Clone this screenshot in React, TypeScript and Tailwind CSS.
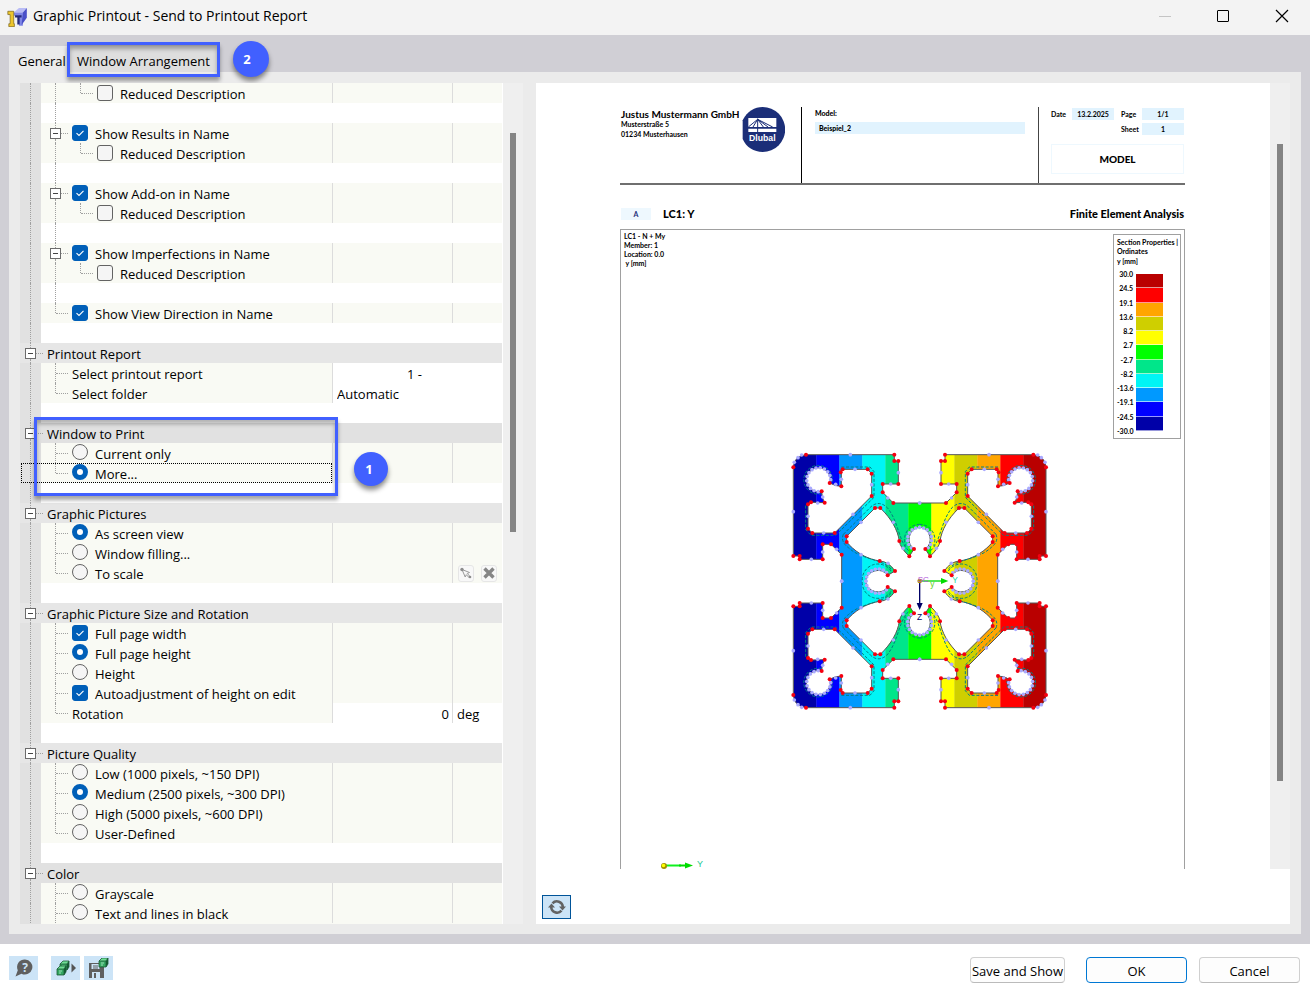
import type { ReactNode } from "react";
import clsx from "clsx";

type Row = {
  kind: "header" | "item" | "blank";
  label?: string;
  level?: 1 | 2;
  control?: "checkbox" | "radio";
  group?: string;
  checked?: boolean;
  box?: boolean;
  last?: boolean;
  through?: boolean;
  dark?: boolean;
  focused?: boolean;
  value?: "report" | "folder" | "rotation" | "scale";
};

const blank: Row = { kind: "blank" };
const blankThrough: Row = { kind: "blank", through: true };

const nameGroup = (label: string): Row[] => [
  { kind: "item", label, level: 1, control: "checkbox", checked: true, box: true },
  { kind: "item", label: "Reduced Description", level: 2, control: "checkbox", last: true, through: true },
  blankThrough,
];

const radios = (group: string, labels: string[], selected: number): Row[] =>
  labels.map((label, i) => ({
    kind: "item",
    label,
    level: 1,
    control: "radio",
    group,
    checked: i === selected,
    last: i === labels.length - 1,
  }));

const rows: Row[] = [
  { kind: "item", label: "Reduced Description", level: 2, control: "checkbox", last: true, through: true },
  blankThrough,
  ...nameGroup("Show Results in Name"),
  ...nameGroup("Show Add-on in Name"),
  ...nameGroup("Show Imperfections in Name"),
  { kind: "item", label: "Show View Direction in Name", level: 1, control: "checkbox", checked: true, last: true },
  blank,
  { kind: "header", label: "Printout Report" },
  { kind: "item", label: "Select printout report", level: 1, value: "report" },
  { kind: "item", label: "Select folder", level: 1, value: "folder", last: true },
  blank,
  { kind: "header", label: "Window to Print", dark: true },
  { kind: "item", label: "Current only", level: 1, control: "radio", group: "window" },
  { kind: "item", label: "More...", level: 1, control: "radio", group: "window", checked: true, last: true, focused: true },
  blank,
  { kind: "header", label: "Graphic Pictures" },
  { kind: "item", label: "As screen view", level: 1, control: "radio", group: "pictures", checked: true },
  { kind: "item", label: "Window filling...", level: 1, control: "radio", group: "pictures" },
  { kind: "item", label: "To scale", level: 1, control: "radio", group: "pictures", last: true, value: "scale" },
  blank,
  { kind: "header", label: "Graphic Picture Size and Rotation" },
  { kind: "item", label: "Full page width", level: 1, control: "checkbox", checked: true },
  { kind: "item", label: "Full page height", level: 1, control: "radio", group: "size", checked: true },
  { kind: "item", label: "Height", level: 1, control: "radio", group: "size" },
  { kind: "item", label: "Autoadjustment of height on edit", level: 1, control: "checkbox", checked: true },
  { kind: "item", label: "Rotation", level: 1, value: "rotation", last: true },
  blank,
  { kind: "header", label: "Picture Quality" },
  ...radios(
    "quality",
    ["Low (1000 pixels, ~150 DPI)", "Medium (2500 pixels, ~300 DPI)", "High (5000 pixels, ~600 DPI)", "User-Defined"],
    1
  ),
  blank,
  { kind: "header", label: "Color", dark: true },
  { kind: "item", label: "Grayscale", level: 1, control: "radio", group: "color" },
  { kind: "item", label: "Text and lines in black", level: 1, control: "radio", group: "color" },
];

function ExpandButton({ label }: { label: string }) {
  return (
    <button
      aria-label={`Collapse ${label}`}
      className="flex size-[11px] shrink-0 items-center justify-center border border-[#6b6b6b] bg-white"
    >
      <span className="h-px w-[5px] bg-[#444]" />
    </button>
  );
}

// one 25px indent column of the tree
function Guide({ type, label = "" }: { type: "none" | "line" | "tee" | "end" | "box"; label?: string }) {
  if (type === "none") return <span className="w-[25px] shrink-0" />;
  if (type === "box") {
    return (
      <span className="flex h-5 w-[25px] shrink-0 pl-[5px]">
        <span className="flex w-[11px] shrink-0 flex-col items-center">
          <span className="h-[5px] w-px border-l border-dotted border-[#a0a0a0]" />
          <ExpandButton label={label} />
          <span className="h-1 w-px border-l border-dotted border-[#a0a0a0]" />
        </span>
        <span className="mt-[10px] w-[7px] shrink-0 border-t border-dotted border-[#a0a0a0]" />
      </span>
    );
  }
  return (
    <span className="flex h-5 w-[25px] shrink-0 pl-[10px]">
      <span
        className={clsx(
          "w-px shrink-0 border-l border-dotted border-[#a0a0a0]",
          type === "end" ? "h-[10px]" : "h-5"
        )}
      />
      {type !== "line" && (
        <span className="mt-[10px] w-3 shrink-0 border-t border-dotted border-[#a0a0a0]" />
      )}
    </span>
  );
}

function Checkbox({ id, checked }: { id: string; checked?: boolean }) {
  return (
    <span className="mt-[2px] grid size-4 shrink-0 self-start">
      <input
        id={id}
        type="checkbox"
        defaultChecked={checked}
        className="peer col-start-1 row-start-1 size-4 appearance-none rounded-[3px] border border-[#636363] bg-[#f5f5f5] checked:border-[#005fb8] checked:bg-[#005fb8]"
      />
      <svg
        viewBox="0 0 16 16"
        className="pointer-events-none invisible col-start-1 row-start-1 size-4 peer-checked:visible"
      >
        <path d="M4.5 8.2 7 10.5l4.5-4.7" fill="none" stroke="#fff" strokeWidth="1.1" />
      </svg>
    </span>
  );
}

function Radio({ id, name, checked }: { id: string; name?: string; checked?: boolean }) {
  return (
    <input
      id={id}
      type="radio"
      name={name}
      defaultChecked={checked}
      className="mt-px size-4 shrink-0 appearance-none self-start rounded-full border border-[#636363] bg-[#f5f5f5] checked:border-[5px] checked:border-[#005fb8] checked:bg-white"
    />
  );
}

function IconCell({ label, children }: { label: string; children: ReactNode }) {
  return (
    <button
      aria-label={label}
      className="flex h-[17px] w-4 items-center justify-center rounded-[3px] border border-[#e6e6e6] bg-[#f8f8f8]"
    >
      {children}
    </button>
  );
}

function ValueCells({ row, id }: { row: Row; id: string }) {
  if (row.value === "report") {
    return (
      <select id={id} defaultValue="1" className="h-5 w-[170px] appearance-none border-l border-[#dcdcdc] bg-white pt-px pl-[74px]">
        <option value="1">1 -</option>
      </select>
    );
  }
  if (row.value === "folder") {
    return (
      <select id={id} defaultValue="auto" className="h-5 w-[170px] appearance-none border-l border-[#dcdcdc] bg-white pt-px pl-1">
        <option value="auto">Automatic</option>
      </select>
    );
  }
  if (row.value === "rotation") {
    return (
      <>
        <input
          id={id}
          type="text"
          defaultValue="0"
          className="h-5 w-[120px] border-l border-[#dcdcdc] bg-white pt-px pr-[3px] text-right outline-none"
        />
        <span className="h-5 w-[50px] border-l border-[#dcdcdc] bg-white pt-px pl-1">deg</span>
      </>
    );
  }
  return (
    <>
      <span className="h-5 w-[120px] border-l border-[#dcdcdc]" />
      <span className="flex h-5 w-[50px] items-center justify-between border-l border-[#dcdcdc] pr-[5px] pl-[5px]">
        {row.value === "scale" && (
          <>
            <IconCell label="Pick scale">
              <svg viewBox="0 0 14 14" className="size-3.5 shrink-0">
                <path d="M3 3.500 10.500 6.500 8.300 7.500 11 10.500 10 11.500 7.300 8.700 6.200 11Z" fill="none" stroke="#9a9a9a" strokeWidth="1" />
                <circle cx="3" cy="3.500" r="1.700" fill="#8d8d8d" />
                <circle cx="11" cy="11" r="1.300" fill="#8d8d8d" />
              </svg>
            </IconCell>
            <IconCell label="Clear scale">
              <svg viewBox="0 0 14 14" className="size-3.5 shrink-0">
                <path d="M2.500 2.500l9 9M11.500 2.500l-9 9" stroke="#868686" strokeWidth="3.400" />
              </svg>
            </IconCell>
          </>
        )}
      </span>
    </>
  );
}

function TreeRow({ row, index }: { row: Row; index: number }) {
  const id = `opt-${index}`;
  if (row.kind === "blank") {
    return (
      <div className="flex h-5 bg-[linear-gradient(to_right,#e1e1e1_21px,#ffffff_21px)]">
        <Guide type="line" />
        {row.through && <Guide type="line" />}
      </div>
    );
  }
  if (row.kind === "header") {
    return (
      <div className={clsx("flex h-5", row.dark ? "bg-[#e1e1e1]" : "bg-[#e6e6e6]")}>
        <Guide type="box" label={row.label} />
        <h3 className="pt-px pl-[2px]">{row.label}</h3>
      </div>
    );
  }
  const first = row.level === 2 ? "line" : row.box ? "box" : row.last ? "end" : "tee";
  return (
    <div className="flex h-5 bg-[linear-gradient(to_right,#e1e1e1_21px,#f9faf4_21px)]">
      <div className="relative flex h-5 w-[312px] shrink-0">
        <Guide type="line" />
        <Guide type={first} label={row.label} />
        {row.level === 2 && <Guide type="end" />}
        <div className="flex gap-[7px] pl-[2px]">
          {row.control === "checkbox" && <Checkbox id={id} checked={row.checked} />}
          {row.control === "radio" && <Radio id={id} name={row.group} checked={row.checked} />}
          <label htmlFor={id} className="pt-px whitespace-nowrap">
            {row.label}
          </label>
        </div>
        {row.focused && (
          <span className="pointer-events-none absolute inset-y-0 right-0 left-px border border-dotted border-black" />
        )}
      </div>
      <ValueCells row={row} id={id} />
    </div>
  );
}

/* ---------- section picture ---------- */

const scale = ["#b90000", "#ff0000", "#ffa500", "#cfcf00", "#ffff00", "#00ff00", "#00e68a", "#00f5f5", "#0099ff", "#0000ff", "#0000a8"];
const ticks = ["30.0", "24.5", "19.1", "13.6", "8.2", "2.7", "-2.7", "-8.2", "-13.6", "-19.1", "-24.5", "-30.0"];

// the profile is drawn as one quarter and mirrored around (404, 408)
const mirrors = ["", "translate(808 0) scale(-1 1)", "translate(0 817) scale(1 -1)", "translate(808 817) scale(-1 -1)"];

const outer = "H170 V329 L138 298 H113 V343 H44 V333 H25 V67 Q27 33 63 29 H328 V48 H340 V117 H293 V142 L325 174 H406";
const chamber =
  "M173 73 H248 L260 86 V153 L149 264 H82 L69 251 V178 L78 172 L119 173 Q110 160 110 139 A36 36 0 1 1 135 114 Q150 124 169 124 V82 Z";
const core =
  "M404 246 A37 37 0 0 0 387 312 L373 334 Q345 308 343 288 C338 255 320 222 286 189 H270 L185 274 V291 C205 315 240 342 284 348 Q312 350 330 378 L308 391 A37 37 0 0 0 242 408";
const dashed =
  "M169 66 H255 L267 80 V157 L152 271 H78 L62 254 V178 M110 146 A43 43 0 1 1 142 110 M175 268 L256 187 Q280 164 306 187 C342 230 340 290 372 318 M175 268 Q166 290 190 308 C230 345 290 340 318 372 M404 238 A46 46 0 0 0 362 302 M318 378 A47 47 0 0 0 232 408";

const redDots = [
  [63, 29], [25, 67], [328, 29], [328, 48], [340, 48], [340, 117], [293, 117], [293, 142], [325, 174], [25, 333],
  [44, 333], [44, 343], [113, 343], [113, 298], [138, 298], [170, 329], [173, 73], [167, 82], [248, 73], [260, 86],
  [260, 153], [149, 264], [82, 264], [69, 251], [69, 178], [78, 172], [119, 173], [110, 139], [134, 114], [169, 124],
  [270, 189], [286, 189], [185, 274], [185, 291], [343, 288], [373, 334], [387, 312], [284, 348], [330, 378], [308, 391],
];

const ring = (cx: number, cy: number, from: number, to: number, n: number) =>
  Array.from({ length: n }, (_, i) => {
    const a = ((from + ((to - from) * i) / (n - 1)) * Math.PI) / 180;
    return [cx + 36 * Math.cos(a), cy + 36 * Math.sin(a)];
  });

const blueDots = [
  [50, 30], [39, 38], [28, 52], [196, 29], [340, 83], [317, 117], [308, 159], [404, 174], [25, 200], [79, 343],
  [113, 321], [155, 313], [170, 408], [210, 73], [260, 119], [204, 208], [116, 264], [69, 214], [98, 174], [113, 156],
  [152, 118], [169, 103], [228, 232], [325, 232], [228, 329], [354, 310], [309, 355],
  ...ring(101, 104, 92, 360, 14),
  ...ring(404, 283, 135, 270, 8),
  ...ring(279, 408, 180, 315, 8),
];

function SectionPicture() {
  return (
    <svg viewBox="0 0 810 819" className="h-[273px] w-[270px] shrink-0" role="img" aria-label="Profile cross-section">
      <defs>
        <clipPath id="profile">
          {mirrors.map((m) => (
            <path key={m} d={`M406 410 H170 ${outer} Z`} transform={m || undefined} />
          ))}
        </clipPath>
      </defs>
      <g clipPath="url(#profile)">
        {[...scale].reverse().map((c, i) => (
          <rect key={c} x={25 + i * 69} y="20" width="70" height="780" fill={c} />
        ))}
      </g>
      {mirrors.map((m) => (
        <g key={m} transform={m || undefined}>
          <path d={`${core} V410 H406 V246 Z`} fill="#fff" />
          <path d={chamber} fill="#fff" />
          <g fill="none" stroke="#555" strokeWidth="3">
            <path d={`M170 408 ${outer}`} />
            <path d={chamber} />
            <path d={core} />
          </g>
          <path d={dashed} fill="none" stroke="#007f80" strokeWidth="3" strokeDasharray="9 5" />
          {blueDots.map(([x, y], i) => (
            <circle key={i} cx={x} cy={y} r="5.500" fill="#aaaaff" />
          ))}
          {redDots.map(([x, y], i) => (
            <circle key={i} cx={x} cy={y} r="6" fill="#f50010" />
          ))}
        </g>
      ))}
      <path d="M404 408 H472" stroke="#00dc00" strokeWidth="4" />
      <path d="M468 399 L490 408 L468 417Z" fill="#00dc00" />
      <path d="M404 408 V478" stroke="#000066" strokeWidth="4" />
      <path d="M395 474 H413 L404 495Z" fill="#000066" />
      <circle cx="404" cy="408" r="7" fill="#b09000" />
      <g fontFamily="Liberation Sans, sans-serif" fontSize="25" fontWeight="400">
        <text x="398" y="412" fill="#b050d8" fontSize="24">SC</text>
        <text x="502" y="414" fill="#20d8a0">Y</text>
        <text x="436" y="427" fill="#60d020">y</text>
        <text x="396" y="524" fill="#000066">Z</text>
      </g>
    </svg>
  );
}

function DlubalLogo() {
  return (
    <svg viewBox="0 0 129 135" className="h-[45px] w-[43px] shrink-0" role="img" aria-label="Dlubal">
      <path d="M2 40 C16 12 38 0 62 0 A67 67 0 1 1 62 135 C36 135 12 120 2 96Z" fill="#1b2e78" />
      <path d="M19 33 H103 V60 H19Z M19 65 H103 V75 H19Z" fill="#fff" />
      <path d="M19 60 L47 37 L92 60 M47 35 V75 M47 37 L64 60 M47 37 L78 60 M47 37 L33 60" fill="none" stroke="#1b2e78" strokeWidth="3" />
      <text x="61" y="101" textAnchor="middle" fill="#fff" fontFamily="Liberation Sans, sans-serif" fontWeight="700" fontSize="26">
        Dlubal
      </text>
    </svg>
  );
}

function Report() {
  return (
    <div className="flex min-w-0 flex-1 flex-col bg-white pt-6 pr-[85px] pl-[84px] font-[Lato,sans-serif] text-[7px] leading-[10px] font-bold text-black">
      <header className="grid h-[78px] shrink-0 grid-cols-[181px_237px_1fr] border-b-2 border-[#6f6f6f]">
        <div className="flex items-start justify-between pr-4 pl-px">
          <div className="pt-[2px] whitespace-nowrap">
            <p className="text-[10px]">Justus Mustermann GmbH</p>
            <p>Musterstraße 5</p>
            <p>01234 Musterhausen</p>
          </div>
          <DlubalLogo />
        </div>
        <div className="border-l border-black pr-[13px] pl-[13px]">
          <p className="pt-px font-black">Model:</p>
          <p className="mt-1 h-3 bg-[#e1f3fe] pt-px pl-1 font-black">Beispiel_2</p>
        </div>
        <div className="border-l border-[#444] pr-px pl-3">
          <div className="grid grid-cols-[1fr_42px_28px_42px] gap-y-[3px] pt-px leading-3">
            <span>Date</span>
            <span className="bg-[#e1f3fe] text-center">13.2.2025</span>
            <span className="pl-[7px]">Page</span>
            <span className="bg-[#e1f3fe] text-center">1/1</span>
            <span className="col-start-3 pl-[7px]">Sheet</span>
            <span className="bg-[#e1f3fe] text-center">1</span>
          </div>
          <p className="mt-[9px] border border-[#eef8fe] text-center text-[10px] leading-7 font-black">MODEL</p>
        </div>
      </header>

      <div className="flex h-11 shrink-0 items-center pt-[13px] text-[11px]">
        <span className="ml-px h-3 w-[30px] bg-[#eef8fe] text-center text-[7px] leading-3 text-[#1b2e78]">A</span>
        <h2 className="ml-3 font-black">LC1: Y</h2>
        <h2 className="ml-auto pr-px font-black">Finite Element Analysis</h2>
      </div>

      <div className="flex min-h-0 flex-1 flex-col border border-b-0 border-[#a0a0a0]">
        <div className="flex justify-between pr-[3px] pl-[3px]">
          <div className="pt-[2px] leading-[9px]">
            <p>LC1 - N + My</p>
            <p>Member: 1</p>
            <p>Location: 0.0</p>
            <p>&nbsp;y [mm]</p>
          </div>
          <div className="mt-1 h-[205px] w-[68px] border border-[#a0a0a0] pt-[3px] pl-[3px] leading-[9px] whitespace-nowrap">
            <p>Section Properties |</p>
            <p>Ordinates</p>
            <p className="pt-px">y [mm]</p>
            <div className="flex gap-[3px] pt-1">
              <div className="flex h-[166px] w-4 flex-col justify-between text-right">
                {ticks.map((t) => (
                  <span key={t}>{t}</span>
                ))}
              </div>
              <div className="mt-1 flex h-[157px] w-[27px] flex-col">
                {scale.map((c) => (
                  <span key={c} className="flex-1 border-b border-white/60" style={{ backgroundColor: c }} />
                ))}
              </div>
            </div>
          </div>
        </div>
        <div className="flex justify-center pt-[6px] pl-[34px]">
          <SectionPicture />
        </div>
        <svg viewBox="0 0 50 14" className="mt-auto ml-[38px] h-[14px] w-[50px] shrink-0">
          <path d="M5 10.500H22" stroke="#10f020" strokeWidth="2" />
          <path d="M26 7.500l8 3-8 3Z" fill="#00dc00" />
          <path d="M20 10.500H27" stroke="#00dc00" strokeWidth="2" />
          <circle cx="5" cy="11" r="3" fill="#a09000" />
          <circle cx="4.500" cy="10.500" r="1.800" fill="#ffff00" />
          <text x="38" y="12" fontSize="9" fill="#20c890" fontFamily="Liberation Sans, sans-serif" fontWeight="400">
            Y
          </text>
        </svg>
      </div>
    </div>
  );
}

/* ---------- small icons ---------- */

function AppIcon() {
  return (
    <svg viewBox="0 0 60 58" className="h-[19px] w-5" aria-hidden="true">
      <path d="M20 14 L36 0 H60 L48 14Z" fill="#b9bcf5" />
      <path d="M20 14 H48 V54 H36 V24 H20Z" fill="#8087e6" />
      <path d="M48 14 L60 0 V30 L44 52Z" fill="#4a50c8" />
      <path d="M2 10 H20 V48 H22 V57 H5 V48 H9 V20 H2Z" fill="#edc52c" stroke="#6e5a14" strokeWidth="2" />
      <path d="M24 22 H44 V29 H38 V50 H31 V29 H24Z" fill="#252a78" />
    </svg>
  );
}

function Cube({ x = 0, y = 0 }: { x?: number; y?: number }) {
  return (
    <g transform={`translate(${x} ${y})`}>
      <path d="M0 3 3 0h6L7 3Z" fill="#6fe096" />
      <path d="M0 3h7v6H0Z" fill="#35a863" />
      <path d="M7 3l2-3v6L7 9Z" fill="#0f5c30" />
      <path d="M0 3h7v6H0ZM0 3 3 0h6v6l-2 3M7 3l2-3" fill="none" stroke="#1c5a36" strokeWidth="0.8" />
      <path d="M2 5h3M2 7h2" stroke="#b8f0cc" strokeWidth="0.8" />
    </g>
  );
}

function ToolButton({ label, children }: { label: string; children: ReactNode }) {
  return (
    <button aria-label={label} className="flex h-6 w-[29px] items-center justify-center bg-[#cce4f7]">
      {children}
    </button>
  );
}

function Scrollbar({ className, thumb }: { className: string; thumb: string }) {
  return (
    <div className={clsx("flex w-5 shrink-0 justify-center bg-[#efefef]", className)}>
      <span className={clsx("w-[6px] bg-[#858585]", thumb)} />
    </div>
  );
}

export default function App() {
  return (
    <div className="flex h-screen flex-col bg-white font-['Open_Sans',sans-serif] text-[13px] leading-5 text-black">
      <header className="flex h-[35px] shrink-0 items-center bg-[#f3f3f3] pl-[7px]">
        <AppIcon />
        <h1 className="ml-[6px] pb-[3px] text-[14px]">Graphic Printout - Send to Printout Report</h1>
        <div className="ml-auto flex items-center gap-[46px] pr-[21px] pb-[3px]">
          <button aria-label="Minimize" className="h-px w-3 bg-[#c4c4c4]" />
          <button aria-label="Maximize" className="size-3 rounded-[1px] border border-black" />
          <button aria-label="Close">
            <svg viewBox="0 0 14 14" className="size-3.5">
              <path d="M1 1l12 12M13 1 1 13" stroke="#000" strokeWidth="1.200" />
            </svg>
          </button>
        </div>
      </header>

      <main className="flex min-h-0 flex-1 flex-col bg-[#d0cfd5] px-[9px] pt-[11px] pb-[10px]">
        <div role="tablist" className="flex h-[26px] shrink-0">
          <button role="tab" aria-selected="true" className="w-[58px] bg-[#ebebeb] pt-1 pl-[9px] text-left">
            General
          </button>
          <div className="relative">
            <button role="tab" aria-selected="false" className="h-[26px] w-[153px] bg-[#dedede] pt-1">
              Window Arrangement
            </button>
            <span className="pointer-events-none absolute -top-1 left-0 h-[35px] w-[153px] border-[3px] border-[#4160ff] shadow-[0_4px_4px_rgba(0,0,0,0.35),inset_0_4px_4px_rgba(0,0,0,0.3)]" />
            <span className="absolute -top-[5px] left-[166px] flex size-9 items-center justify-center rounded-full bg-[#4160ff] pr-2 text-[13px] font-bold text-white shadow-[0_4px_5px_rgba(0,0,0,0.45)]">
              2
            </span>
          </div>
        </div>

        <div className="flex min-h-0 flex-1 bg-[#ebebeb] px-[11px] pt-[11px] pb-[10px]">
          <section className="relative w-[483px] shrink-0 bg-[linear-gradient(to_right,#e1e1e1_21px,#f9faf4_21px)]">
            <div className="h-full overflow-hidden border-r border-white">
              {rows.map((row, i) => (
                <TreeRow key={i} row={row} index={i} />
              ))}
            </div>
            <span className="pointer-events-none absolute top-[334px] left-[14px] h-[79px] w-[304px] border-[3px] border-[#4160ff] shadow-[0_4px_4px_rgba(0,0,0,0.35),inset_0_4px_4px_rgba(0,0,0,0.3)]" />
            <span className="absolute top-[369px] left-[334px] flex size-[34px] items-center justify-center rounded-full bg-[#4160ff] pr-1 text-[13px] font-bold text-white shadow-[0_4px_5px_rgba(0,0,0,0.45)]">
              1
            </span>
          </section>
          <Scrollbar className="pt-[50px]" thumb="h-[399px]" />

          <section className="ml-[13px] flex min-w-0 flex-1 flex-col bg-white">
            <div className="flex min-h-0 flex-1">
              <Report />
              <Scrollbar className="pt-[61px]" thumb="h-[637px]" />
            </div>
            <div className="flex h-[55px] shrink-0 items-end pb-[5px] pl-[6px]">
              <button
                aria-label="Refresh preview"
                className="flex h-6 w-[29px] items-center justify-center border border-[#005499] bg-[#cce4f7]"
              >
                <svg viewBox="0 0 18 16" className="h-4 w-[18px]">
                  <path d="M4.500 4.300A5.900 5.900 0 0 1 14.800 8M13.500 11.700A5.900 5.900 0 0 1 3.200 8" fill="none" stroke="#636363" strokeWidth="2.600" />
                  <path d="M11 7.500h7l-3.500 4ZM0 8.500h7l-3.500-4Z" fill="#636363" />
                </svg>
              </button>
            </div>
          </section>
        </div>
      </main>

      <footer className="flex h-[49px] shrink-0 items-start bg-white pt-3 pr-[10px] pl-[9px]">
        <ToolButton label="Help">
          <svg viewBox="0 0 18 18" className="size-[18px]">
            <path d="M10 0.500a7.500 7.500 0 1 1-3.500 14.200L0.500 17.500l2.300-6.300A7.500 7.500 0 0 1 10 0.500Z" fill="#5f5f5f" />
            <text x="10" y="12.500" textAnchor="middle" fontSize="12" fontWeight="700" fill="#cce4f7">
              ?
            </text>
          </svg>
        </ToolButton>
        <div className="ml-[13px] flex gap-1">
          <ToolButton label="Load default settings">
            <svg viewBox="0 0 20 16" className="h-4 w-5">
              <Cube x={4} y={1} />
              <Cube x={1} y={6} />
              <path d="M15.500 3.500 20 8l-4.500 4.500Z" fill="#555" />
            </svg>
          </ToolButton>
          <ToolButton label="Save as default">
            <svg viewBox="0 0 21 20" className="h-5 w-[21px]">
              <path d="M1 5h12l3 3v12H1Z" fill="#5f5f5f" />
              <path d="M3.500 6h8v5h-8ZM4 14h8v6H4Z" fill="#cce4f7" />
              <path d="M5 8h5M5 10h5" stroke="#5f5f5f" strokeWidth="1" />
              <path d="M6 15h2v5H6Z" fill="#5f5f5f" />
              <Cube x={11} y={0} />
            </svg>
          </ToolButton>
        </div>
        <div className="ml-auto flex pt-px">
          <button className="h-[26px] w-[95px] rounded border border-[#d0d0d0] border-b-[#bbb] bg-[#fdfdfd] pt-px whitespace-nowrap">
            Save and Show
          </button>
          <button className="ml-[21px] h-[26px] w-[101px] rounded border border-[#0078d4] bg-[#fdfdfd] pt-px">OK</button>
          <button className="ml-3 h-[26px] w-[101px] rounded border border-[#d0d0d0] border-b-[#bbb] bg-[#fdfdfd] pt-px">
            Cancel
          </button>
        </div>
      </footer>
    </div>
  );
}
